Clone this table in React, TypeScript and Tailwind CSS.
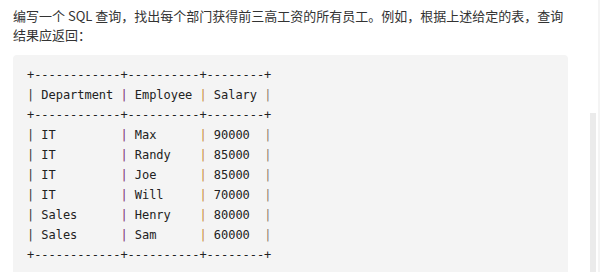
const border = "+------------+----------+--------+";

const rows: [string, string, string][] = [
  ["Department", "Employee", "Salary"],
  ["IT", "Max", "90000"],
  ["IT", "Randy", "85000"],
  ["IT", "Joe", "85000"],
  ["IT", "Will", "70000"],
  ["Sales", "Henry", "80000"],
  ["Sales", "Sam", "60000"],
];

const widths = [10, 8, 6];

function Row({ cells }: { cells: [string, string, string] }) {
  return (
    <div>
      <span className="text-[#333]">|</span>
      {" " + cells[0].padEnd(widths[0]) + " "}
      <span className="text-[#7b2a72]">|</span>
      {" " + cells[1].padEnd(widths[1]) + " "}
      <span className="text-[#c98a3c]">|</span>
      {" " + cells[2].padEnd(widths[2]) + " "}
      <span className="text-[#8c7a66]">|</span>
    </div>
  );
}

export default function App() {
  return (
    <div className="relative w-[602px] h-[272px] overflow-hidden bg-white">
      <div className="pl-[13px] w-[568px]">
        <p
          className="pt-[6px] text-[13px] leading-[19px] text-[#333]"
          style={{ fontFamily: '"Noto Sans CJK SC", "Noto Sans", sans-serif' }}
        >
          编写一个 SQL 查询，找出每个部门获得前三高工资的所有员工。例如，根据上述给定的表，查询
          <br />
          结果应返回：
        </p>
        <pre
          className="mt-[11px] rounded-[4px] bg-[#f4f4f4] pl-[14px] pt-[10px] pb-[16px] text-[12px] leading-[20px] text-[#222] whitespace-pre tracking-[-0.04px]"
          style={{ fontFamily: '"DejaVu Sans Mono", "Liberation Mono", monospace' }}
        >
          <div>{border}</div>
          <Row cells={rows[0]} />
          <div>{border}</div>
          {rows.slice(1).map((r, i) => (
            <Row key={i} cells={r} />
          ))}
          <div>{border}</div>
        </pre>
      </div>

      {/* scrollbar */}
      <div className="absolute left-[590px] top-[113px] w-[6px] h-[200px] bg-[#ebebeb]" />
      <div className="absolute left-[598px] top-0 w-[2px] h-full bg-[#f4f4f4]" />
    </div>
  );
}
